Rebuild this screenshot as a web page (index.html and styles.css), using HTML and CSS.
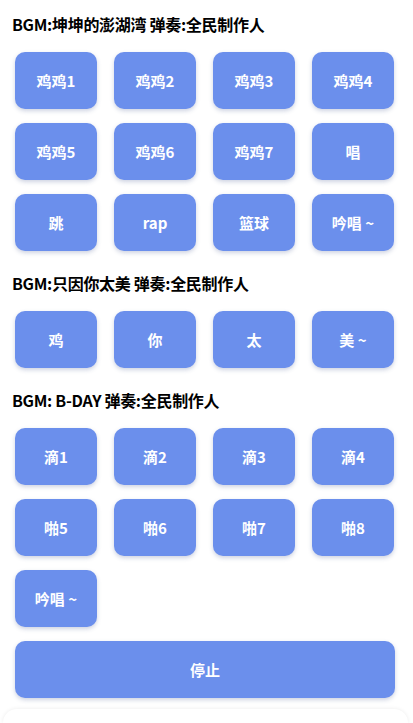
FILE: index.html
```html
<!DOCTYPE html>
<html lang="zh-CN">
<head>
<meta charset="utf-8">
<link rel="stylesheet" href="styles.css">
</head>
<body>
<div class="page">
  <section class="section">
    <h2 class="title">BGM:坤坤的澎湖湾 弹奏:全民制作人</h2>
    <div class="grid">
      <button class="btn">鸡鸡1</button>
      <button class="btn">鸡鸡2</button>
      <button class="btn">鸡鸡3</button>
      <button class="btn">鸡鸡4</button>
      <button class="btn">鸡鸡5</button>
      <button class="btn">鸡鸡6</button>
      <button class="btn">鸡鸡7</button>
      <button class="btn">唱</button>
      <button class="btn">跳</button>
      <button class="btn">rap</button>
      <button class="btn">篮球</button>
      <button class="btn">吟唱 ~</button>
    </div>
  </section>
  <section class="section">
    <h2 class="title">BGM:只因你太美 弹奏:全民制作人</h2>
    <div class="grid">
      <button class="btn">鸡</button>
      <button class="btn">你</button>
      <button class="btn">太</button>
      <button class="btn">美 ~</button>
    </div>
  </section>
  <section class="section">
    <h2 class="title">BGM: B-DAY 弹奏:全民制作人</h2>
    <div class="grid">
      <button class="btn">滴1</button>
      <button class="btn">滴2</button>
      <button class="btn">滴3</button>
      <button class="btn">滴4</button>
      <button class="btn">啪5</button>
      <button class="btn">啪6</button>
      <button class="btn">啪7</button>
      <button class="btn">啪8</button>
      <button class="btn">吟唱 ~</button>
    </div>
  </section>
  <button class="btn stop">停止</button>
  <div class="card"></div>
</div>
</body>
</html>
```

FILE: styles.css
```css
html, body {
  margin: 0;
  padding: 0;
  background: #ffffff;
  overflow: hidden;
}
body {
  font-family: "Noto Sans CJK SC", "Noto Sans", sans-serif;
  color: #000;
}
.page {
  padding: 14px 0 0 15px;
  width: 413px;
  box-sizing: border-box;
}
.section {
  margin-bottom: 22px;
}
.section:last-of-type {
  margin-bottom: 14px;
}
.title {
  margin: 0 0 18px -3px;
  font-size: 16px;
  line-height: 20px;
  font-weight: 700;
  letter-spacing: -0.3px;
}
.grid {
  display: grid;
  grid-template-columns: repeat(4, 82px);
  column-gap: 17px;
  row-gap: 14px;
}
.btn {
  height: 57px;
  border: none;
  border-radius: 10px;
  background: #6b8fec;
  color: #ffffff;
  font-family: "Noto Sans CJK SC", "Noto Sans", sans-serif;
  font-size: 15px;
  font-weight: 700;
  padding: 0;
  box-shadow: 0 2px 4px rgba(60, 80, 140, 0.25);
}
.stop {
  display: block;
  width: 380px;
}
.card {
  margin: 11px 0 0 -12px;
  width: 405px;
  height: 14px;
  border-radius: 14px 14px 0 0;
  background: #fff;
  box-shadow: 0 0 4px rgba(0, 0, 0, 0.08);
}
```
